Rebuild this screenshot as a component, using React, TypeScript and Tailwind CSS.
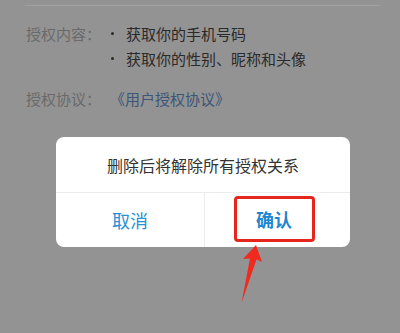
import React from "react";

export default function App() {
  const font = { fontFamily: '"Noto Sans CJK SC", "Noto Sans", sans-serif' };
  return (
    <div
      className="relative w-[400px] h-[333px] overflow-hidden bg-[#939393]"
      style={font}
    >
      <div className="pt-[5px] px-[25px]">
        <div className="h-px w-[355px] bg-[#a1a1a1]" />
      </div>
      <div className="pl-[26px] pt-[15px] text-[15px] leading-[25px]">
        <div className="flex">
          <div className="w-[85px] text-[#6a6a6a]">授权内容：</div>
          <div className="flex flex-col text-[#2a2a2a]">
            <div className="flex items-center">
              <span className="w-[3px] h-[3px] rounded-full bg-[#2a2a2a] mr-[12px]" />
              <span>获取你的手机号码</span>
            </div>
            <div className="flex items-center">
              <span className="w-[3px] h-[3px] rounded-full bg-[#2a2a2a] mr-[12px]" />
              <span>获取你的性别、昵称和头像</span>
            </div>
          </div>
        </div>
        <div className="flex mt-[15px]">
          <div className="w-[84px] text-[#6a6a6a]">授权协议：</div>
          <div className="text-[#3b5679]">《用户授权协议》</div>
        </div>
      </div>

      <div className="mt-[26px] ml-[56px] w-[294px] h-[110px] bg-white rounded-[8px] flex flex-col">
        <div className="h-[55px] flex items-center justify-center text-[16px] text-[#333333]">
          删除后将解除所有授权关系
        </div>
        <div className="h-px bg-[#ececec]" />
        <div className="flex flex-1">
          <div className="w-[148px] flex items-center justify-center text-[18px] text-[#2a90d6]">
            取消
          </div>
          <div className="w-px bg-[#ececec]" />
          <div className="flex-1 flex items-center justify-center">
            <div className="mr-[7px] -mt-[2px] w-[81px] h-[46px] border-[3px] border-[#e6261c] rounded-[4px] flex items-center justify-center text-[18px] font-bold text-[#1f86d0]">
              确认
            </div>
          </div>
        </div>
      </div>

      <svg
        className="absolute left-0 top-0"
        width="400"
        height="333"
        viewBox="0 0 400 333"
      >
        <polygon
          points="256,245 262,262 256.5,259.5 241.5,303 250,258.5 243,259"
          fill="#f02a1e"
        />
      </svg>
    </div>
  );
}
